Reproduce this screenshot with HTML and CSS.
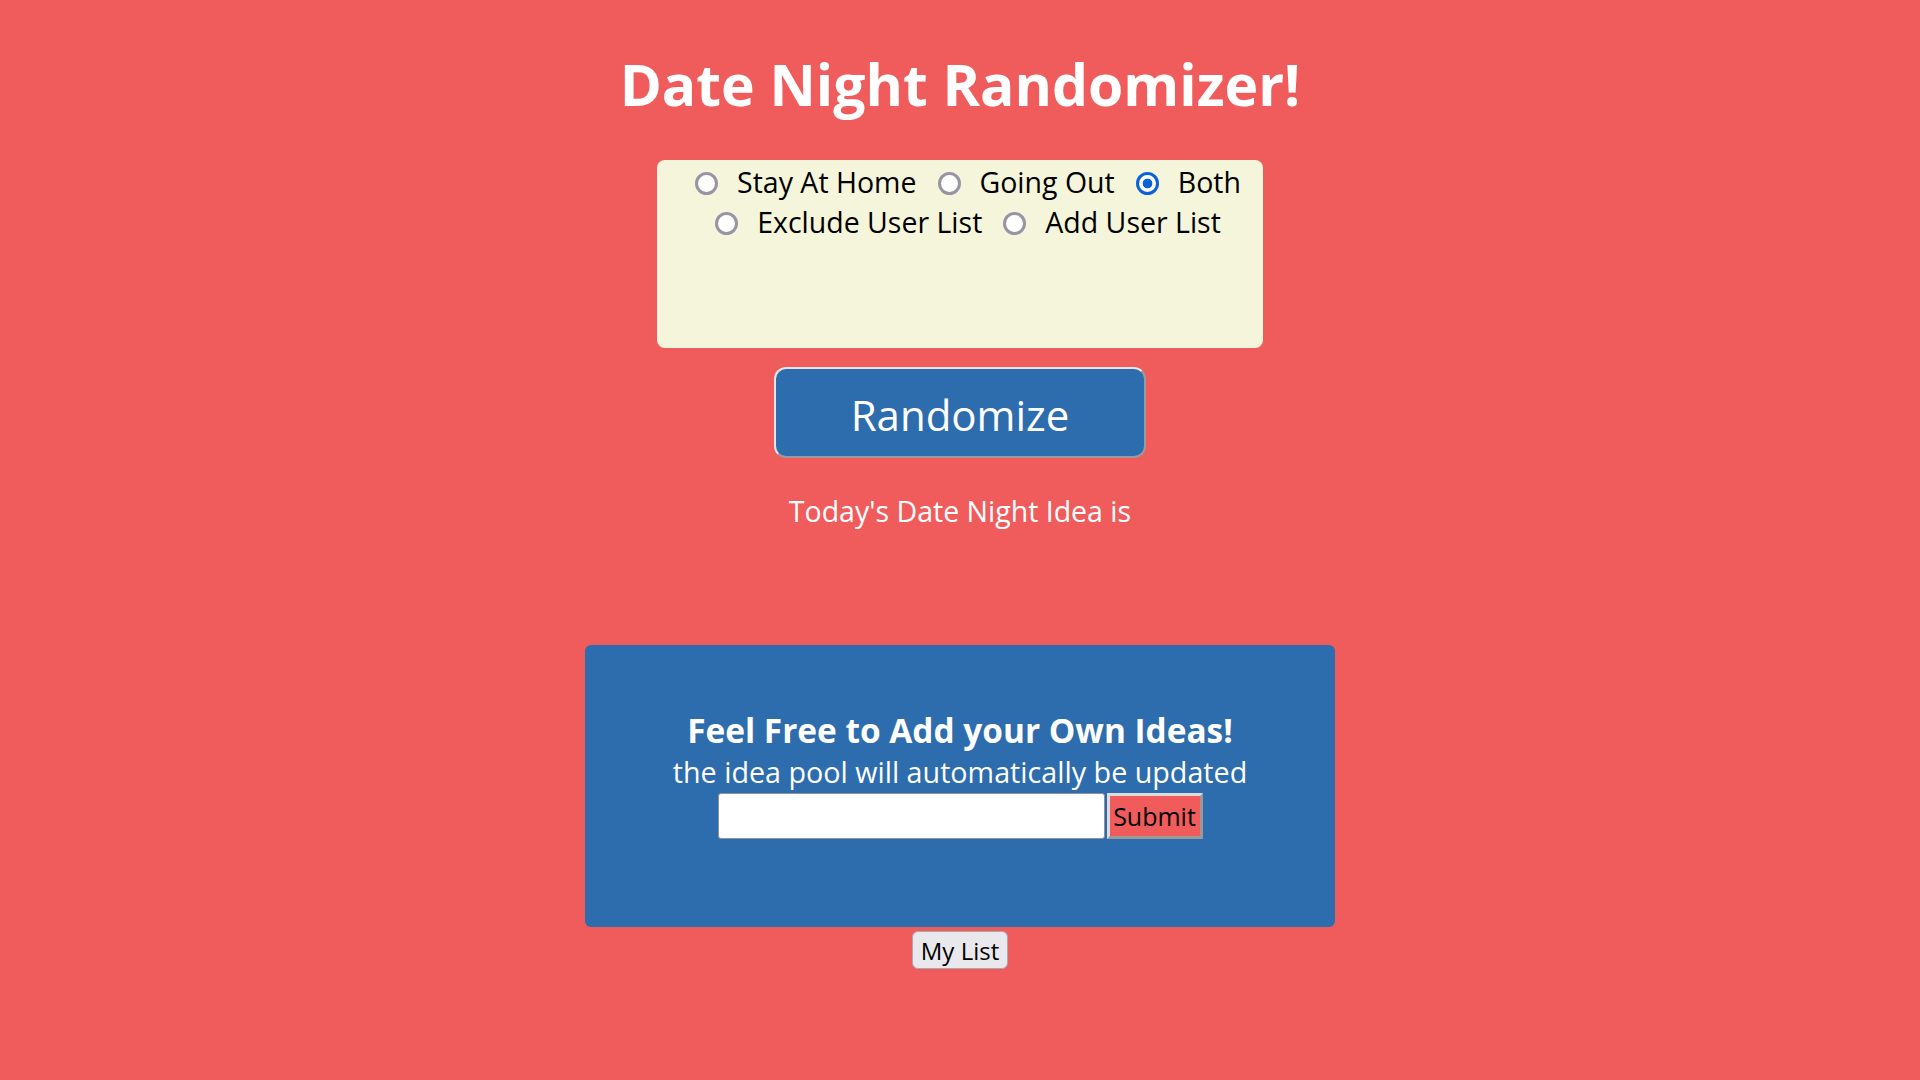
FILE: index.html
```html
<!DOCTYPE html>
<html lang="en">
<head>
<meta charset="utf-8">
<title>Date Night Randomizer</title>
<link rel="stylesheet" href="styles.css">
</head>
<body>
<main class="page">
  <h1 class="title">Date Night Randomizer!</h1>
  <form class="options">
    <div class="opt-row">
      <label class="opt"><input type="radio" name="where"><span>Stay At Home</span></label>
      <label class="opt"><input type="radio" name="where"><span>Going Out</span></label>
      <label class="opt"><input type="radio" name="where" checked><span>Both</span></label>
    </div>
    <div class="opt-row">
      <label class="opt"><input type="radio" name="list"><span>Exclude User List</span></label>
      <label class="opt"><input type="radio" name="list"><span>Add User List</span></label>
    </div>
  </form>
  <button class="randomize" type="button">Randomize</button>
  <p class="idea">Today's Date Night Idea is</p>
  <section class="add-box">
    <h2 class="add-title">Feel Free to Add your Own Ideas!</h2>
    <p class="add-sub">the idea pool will automatically be updated</p>
    <div class="add-form">
      <input class="add-input" type="text">
      <button class="submit" type="button">Submit</button>
    </div>
  </section>
  <button class="mylist" type="button">My List</button>
</main>
</body>
</html>
```
FILE: styles.css
```css
html, body {
  margin: 0;
  padding: 0;
}
body {
  background: #f05c5c;
  font-family: "Open Sans", "Noto Sans", sans-serif;
  min-height: 1080px;
}
.page {
  display: flex;
  flex-direction: column;
  align-items: center;
  text-align: center;
}
.title {
  margin: 44px 0 0;
  font-size: 57px;
  line-height: 80px;
  font-weight: 700;
  color: #fff;
}
.options {
  margin-top: 36px;
  width: 606px;
  height: 188px;
  box-sizing: border-box;
  background: #f5f5dc;
  border-radius: 8px;
  padding-top: 2px;
  display: flex;
  flex-direction: column;
  align-items: center;
}
.opt-row {
  display: flex;
  justify-content: center;
  gap: 21px;
  height: 40px;
  align-items: center;
  padding-left: 16px;
}
.opt {
  display: flex;
  align-items: center;
  gap: 19px;
  font-size: 28.5px;
  color: #000;
}
.opt input {
  appearance: none;
  -webkit-appearance: none;
  width: 23px;
  height: 23px;
  margin: 2px 0 0;
  box-sizing: border-box;
  border: 3px solid #9795a3;
  border-radius: 50%;
  background: #fff;
}
.opt input:checked {
  border-color: #0b62d6;
  background: radial-gradient(circle, #0b62d6 0 4.5px, #fff 5.2px);
}
.randomize {
  margin-top: 19px;
  width: 372px;
  height: 91px;
  background: #2d6cad;
  color: #fff;
  font-family: inherit;
  font-size: 42px;
  border: 2px solid;
  border-color: #e6e6e6 #9a9a9a #9a9a9a #e6e6e6;
  border-radius: 12px;
  padding: 4px 0 0;
}
.idea {
  margin: 33px 0 0;
  font-size: 28.5px;
  line-height: 40px;
  color: #fff;
}
.add-box {
  margin-top: 114px;
  width: 750px;
  height: 282px;
  box-sizing: border-box;
  background: #2d6cad;
  border-radius: 6px;
  padding-top: 63px;
  display: flex;
  flex-direction: column;
  align-items: center;
  color: #fff;
}
.add-title {
  margin: 0;
  font-size: 33.4px;
  line-height: 44px;
  font-weight: 700;
}
.add-sub {
  margin: 0;
  font-size: 28.7px;
  line-height: 40px;
}
.add-form {
  display: flex;
  gap: 2px;
  margin-top: 1px;
}
.add-input {
  width: 387px;
  height: 46px;
  box-sizing: border-box;
  border: 1px solid #8f8f9d;
  border-radius: 3px;
  background: #fff;
  margin: 0;
}
.submit {
  width: 96px;
  height: 46px;
  box-sizing: border-box;
  background: #f05c5c;
  color: #000;
  font-family: inherit;
  font-size: 25px;
  border: 3px solid;
  border-color: #dcdcdc #999 #999 #dcdcdc;
  padding: 0;
  margin: 0;
}
.mylist {
  margin-top: 4px;
  height: 38px;
  padding: 0 8px;
  background: #e9e9ed;
  color: #000;
  font-family: inherit;
  font-size: 24px;
  border: 1px solid #a9a9b4;
  border-radius: 6px;
}
```
